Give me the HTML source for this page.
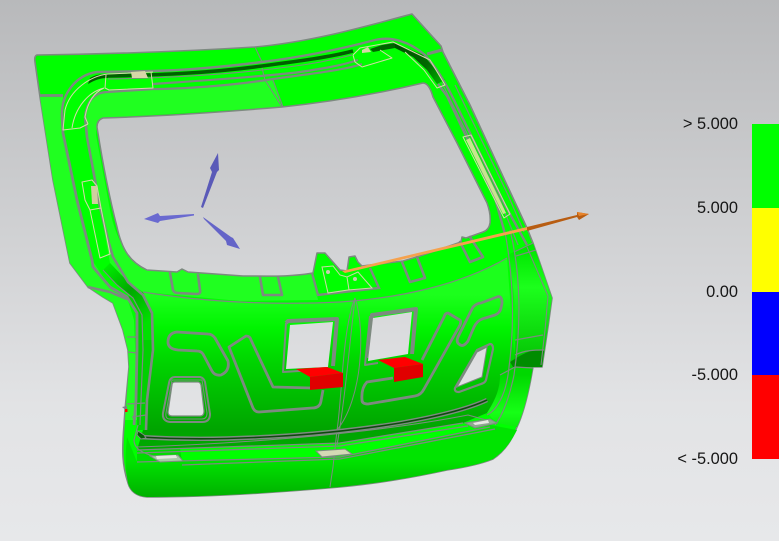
<!DOCTYPE html>
<html><head><meta charset="utf-8"><style>
html,body{margin:0;padding:0;width:779px;height:541px;overflow:hidden;background:#d0d1d3}
svg{display:block;position:absolute;left:0;top:0}
.l{position:absolute;right:41px;font:16.4px/18px "Liberation Sans",sans-serif;color:#161616;white-space:nowrap}
.b{position:absolute;left:752px;width:27px}
</style></head><body>
<svg width="779" height="541" viewBox="0 0 779 541" xmlns="http://www.w3.org/2000/svg">
<defs>
<linearGradient id="bg" gradientUnits="userSpaceOnUse" x1="0" y1="0" x2="0" y2="541"><stop offset="0" stop-color="#b8b9bb"/><stop offset=".75" stop-color="#e2e3e5"/><stop offset="1" stop-color="#e7e8ea"/></linearGradient>
<linearGradient id="body" gradientUnits="userSpaceOnUse" x1="0" y1="295" x2="0" y2="445"><stop offset="0" stop-color="#1cff1c"/><stop offset=".22" stop-color="#00f400"/><stop offset=".45" stop-color="#00d400"/><stop offset=".9" stop-color="#00a400"/><stop offset="1" stop-color="#00a800"/></linearGradient>
<linearGradient id="low" gradientUnits="userSpaceOnUse" x1="0" y1="460" x2="0" y2="497"><stop offset="0" stop-color="#00e400"/><stop offset="1" stop-color="#00b000"/></linearGradient>
<linearGradient id="side" gradientUnits="userSpaceOnUse" x1="0" y1="250" x2="0" y2="375"><stop offset="0" stop-color="#00e800"/><stop offset=".3" stop-color="#1cff1c"/><stop offset="1" stop-color="#00b800"/></linearGradient>
<linearGradient id="chan" gradientUnits="userSpaceOnUse" x1="105" y1="265" x2="150" y2="320"><stop offset="0" stop-color="#00f000"/><stop offset=".5" stop-color="#00a800"/><stop offset="1" stop-color="#00e000"/></linearGradient>
<linearGradient id="bar" gradientUnits="userSpaceOnUse" x1="395" y1="45" x2="442" y2="84"><stop offset="0" stop-color="#005000"/><stop offset=".6" stop-color="#006800"/><stop offset="1" stop-color="#00b000"/></linearGradient>
<linearGradient id="corner" gradientUnits="userSpaceOnUse" x1="0" y1="375" x2="0" y2="450"><stop offset="0" stop-color="#00d800"/><stop offset=".5" stop-color="#16ff16"/><stop offset="1" stop-color="#00d000"/></linearGradient>
</defs>
<rect width="779" height="541" fill="url(#bg)"/>
<!-- silhouette -->
<path d="M37 55C120 54 190 51 255 47C310 42 360 28 412 14L441 46L443 52L470 105L500 170L527 228L533 243L552 298L548 327L542 367L533 367C530 385 525 410 517 427C512 440 505 451 493 459C478 465 460 468 447 470C410 478 380 483 340 487C260 494 200 497 147 497C135 496 130 490 128 483C122 465 122 450 124 425L125 410L129 367L128 350L123 330L113 303L103 297L88 287L70 263L53 180L40 97L35 62Q34 56 37 55Z" fill="#00ff00" stroke="#7d8a80" stroke-width="1.6" stroke-linejoin="round"/>
<!-- lighter regions -->
<path d="M40 97L63 97L62 113L63 133L77 200L92 260L110 287L127 297L134 320L138 420L125 420L129 367L128 350L123 330L113 303L103 297L88 287L70 263L53 180Z" fill="#20ff20"/>
<path d="M92 98C95 94 100 92 108 92L153 89L230 85L273 80L282 107L103 118L97 122L96 135L110 210C115 235 125 258 145 265L190 270L312 272L318 300L240 301L143 292L128 282L110 263L100 207L87 137L85 117Z" fill="#20ff20"/>
<!-- lower body -->
<path d="M143 292C210 303 280 305 340 302C400 298 460 285 507 258L515 365C510 390 500 405 487 413L463 423L340 443L137 450L143 430L153 350L152 313Z" fill="url(#body)"/>
<path d="M143 292L152 313L153 350L147 400L146 430L137 430L137 350L137 313L127 297Z" fill="#00d000"/>
<path d="M127 437C126 450 124 460 128 483C130 490 135 496 147 497C200 497 260 494 340 487C380 483 410 478 447 470C460 468 478 465 493 459C505 451 512 440 517 430L490 425L340 457L137 462Z" fill="url(#low)"/>
<path d="M137 450L340 443L463 423L490 427L340 457L137 462Z" fill="#00ff00"/>
<path d="M137 450L180 448L182 462L137 462Z" fill="#00dc00"/>
<!-- channel dark left -->
<path d="M103 270L110 263L128 282L143 295L152 313L153 340L143 340L142 315L133 298L117 285Z" fill="url(#chan)"/>
<!-- right side panel -->
<path d="M508 255L527 245L533 243L552 298L548 327L542 367L513 365C518 330 515 290 508 255Z" fill="url(#side)"/>
<path d="M510 362C525 352 535 348 544 350L542 367L513 367Z" fill="#008c00"/>
<path d="M500 375L515 367L533 367C530 385 525 410 517 427L497 423L487 413C495 400 500 390 500 375Z" fill="url(#corner)"/>
<!-- window -->
<path d="M103 118C170 116 235 111 282 107C340 101 385 92 423 83Q429 83 433 97L457 143L487 203Q491 214 490 223Q489 230 483 232L466 238L462 237L461 242L420 256L403 261L362 266L358 262L355 256L349 257L347 271L340 270L325 253L317 253L313 273C290 277 270 276 243 276L188 272L182 269L177 272L147 270C130 262 122 250 117 227C110 200 103 165 97 127Q97 120 103 118Z" fill="url(#bg)" stroke="#7d8a80" stroke-width="1.5" stroke-linejoin="round"/>
<!-- tabs below window -->
<path d="M312 273L318 295L379 288L370 268" fill="none" stroke="#7d8a80" stroke-width="2.4"/>
<path d="M322 267L333 266L340 275L347 277L358 272L372 288L348 290L328 293ZM347 277L349 290" fill="none" stroke="#cfd8a8" stroke-width="1"/>
<circle cx="328" cy="272" r="2" fill="#c8cdb0"/><circle cx="355" cy="279" r="2" fill="#c8cdb0"/>
<g fill="none" stroke="#7d8a80" stroke-width="2.6" stroke-linejoin="round" stroke-linecap="round">
<path d="M170 273L173 290Q174 293 178 293L197 294Q201 294 200 290L198 275"/>
<path d="M260 277L263 295L282 295L278 277"/>
<path d="M402 262L410 282L425 278L417 257"/>
<path d="M460 242L470 262L483 257L470 237"/>
</g>
<!-- grooves top -->
<path d="M108 76C160 75 210 73 262 66C300 61 330 57 353 51" fill="none" stroke="#006000" stroke-width="3.6"/>
<path d="M395 43L423 55L445 80L437 84L427 70L413 57L395 48Z" fill="url(#bar)"/>
<path d="M370 49L382 45L395 43L395 48L373 52Z" fill="#006400"/>
<path d="M90 78C95 75 100 74 108 74L108 78C100 78 95 80 88 84Z" fill="#005c00"/>
<!-- channel lines -->
<g fill="none" stroke="#7d8a80" stroke-linejoin="round">
<path stroke-width="2.4" d="M62 113C62 95 75 75 97 72L153 71C190 70 230 66 262 62C310 56 345 48 375 40C392 36 410 42 425 55C435 66 445 82 452 96L505 205L527 245"/>
<path stroke-width="1.1" d="M108 79C160 78 210 76 262 70C300 66 325 62 352 55"/>
<path stroke-width="2.2" d="M85 117C86 105 92 92 108 92L153 89C180 89 230 86 273 79C310 74 345 70 362 64"/>
<path stroke-width="2.2" d="M153 84C210 80 270 76 300 72C320 69 340 66 358 60"/>
<path stroke-width="2.8" d="M62 113L63 133L77 200L92 260L93 267L110 287L127 297L137 313L137 350L136 400L134 425"/>
<path stroke-width="2.6" d="M85 117L87 137L100 207L108 240L113 257L128 282L143 295L152 313L153 350L147 400L146 430"/>
<path stroke-width="1.2" d="M103 270L117 285L133 298L142 315L143 350L141 400L140 425"/>
<path stroke-width="2.6" d="M88 287L110 292L127 299"/>
<path stroke-width="1.1" d="M255 47L262 62M262 68L265 80L282 107M273 80L283 107"/>
<path stroke-width="2.8" d="M40 95.5L63 95.5"/>
<path stroke-width="3" d="M427 54L442 50"/>
<path stroke-width="2.4" d="M438 84L447 96L475 155L495 198L505 234"/>
<path stroke-width="1.2" d="M442 83L500 200L518 245"/>
<path stroke-width="1.2" d="M455 85L508 195L524 232"/>
<path stroke-width="1.2" d="M143 292C210 303 280 305 340 302C400 298 460 285 507 258"/>
<path stroke-width="1.2" d="M138 425L134 440C134 450 145 457 180 460M127 337L137 337M128 352L137 353M127 404L145 403M132 417L146 415"/>
<path stroke-width="1" d="M355 298C342 330 342 400 337 430L333 467L330 487M355 298C366 330 362 400 337 430M355 298C350 340 345 400 337 445"/>
<path stroke-width="1.2" d="M505 232C512 270 516 320 508 375C505 395 497 410 487 415M510 230C520 270 522 320 514 375C510 395 503 415 495 425M514 252L533 243M516 256L536 250"/>
<path stroke-width="1.2" d="M515 340L543 335M515 355C525 350 535 350 544 350M500 375L515 367L533 368"/>
<path stroke-width="1.1" d="M527 247L548 296L545 330L541 365"/>
<path stroke-width="1.3" d="M137 450L340 443L463 423M137 453L340 446L468 426M137 462L340 457L490 427M182 465L340 459L495 429"/>
<path stroke-width="1.1" d="M137 447C170 446 340 440 468 415L497 423"/>
</g>
<!-- pale detail lines -->
<g fill="none" stroke="#d6d9aa" stroke-width="1" stroke-linejoin="round">
<path d="M153 72L108 74C90 76 70 90 65 110L63 130L80 128L88 124M106 75L105 88L109 90L153 88L151 72M104 88C88 92 75 108 72 128M88 124L85 117C88 100 95 92 104 88"/>
<path d="M82 182L92 180L97 186L101 208L90 210L85 200ZM90 210L100 258L110 254L101 208"/>
<path d="M353 55L360 48L393 42L430 60L445 85L437 88L424 70L405 52M353 55L355 62L362 67L392 58L380 50"/>
<path d="M463 137L471 135L510 214L504 218L463 137Z"/>
</g>
<path d="M91 186L97 186L98 204L92 204Z" fill="#cfcf9f"/>
<path d="M131 72L145 71L148 78L132 78Z" fill="#d6d6a8"/>
<path d="M362 50L368 47L371 52L362 53Z" fill="#d6d6a8"/>
<path d="M466 140L470 138L506 213L503 214Z" fill="#c7e58f"/>
<!-- dark groove bottom -->
<path d="M140 437C220 442 320 436 400 423C440 416 470 408 487 400" fill="none" stroke="#7d8a80" stroke-width="4.4"/>
<path d="M140 437C220 442 320 436 400 423C440 416 470 408 487 400" fill="none" stroke="#0d4a0d" stroke-width="1.6"/>
<path d="M138 431L144 435L146 438L141 439L137 435Z" fill="#006000" stroke="#7d8a80"/>
<!-- embossed outlines -->
<g fill="none" stroke="#7d8a80" stroke-linejoin="round" stroke-width="2.8">
<path d="M168 342Q168 333 177 332L208 334Q212 334 215 338L228 361Q230 371 221 375Q215 376 212 371L203 354Q201 351 197 351L178 350Q168 349 168 342Z"/>
<path d="M312 388L273 387L251 340Q250 336 246 336L229 347L253 408Q255 412 259 412L312 408Q320 408 321 401L323 390"/>
<path d="M393 378L367 382Q361 388 362 400Q362 404 368 404L415 396Q421 395 424 389L460 325Q462 320 458 319L448 313Q445 313 444 317L422 360"/>
<path d="M473 307Q477 303 481 303L497 297Q502 295 502 303L501 308Q500 313 495 315L482 319Q477 321 474 327L468 341Q463 348 459 344Q456 342 458 337Z"/>
<path stroke-width="2" d="M175 377L200 377Q204 378 205 382L210 414Q210 422 202 422L170 422Q162 421 163 413L169 383Q170 377 175 377Z"/>
<path stroke-width="1" d="M172 380L202 380L207 413Q207 419 202 419L170 419Q165 419 166 413Z"/>
<path stroke-width="4" d="M286 323L288 321L337 319L333 366"/>
<path stroke-width="2" d="M286 323L283 372L330 369"/>
<path stroke-width="4" d="M369 358L372 315L416 309L412 354"/>
<path stroke-width="2" d="M370 316L365 365L378 363"/>
<path stroke-width="2.2" d="M477 350L490 344Q493 344 493 349L486 380Q485 383 481 384L459 392Q454 392 455 388Z"/>
</g>
<!-- holes -->
<g fill="url(#bg)">
<path d="M175 382L198 382Q200 382 201 385L204 411Q204 416 200 416L172 416Q168 416 168 412L172 385Q172 382 175 382Z" stroke="#7d8a80" stroke-width="1.2"/>
<path d="M290 325L333 322L328 367L286 369Z"/>
<path d="M373 318L412 312L408 354L368 361Z"/>
<path d="M477 352L487 347L482 377L457 387Z" stroke="#7d8a80" stroke-width="1"/>
</g>
<path d="M316 451L345 449L352 454L322 457Z" fill="#d4d9b4" stroke="#7d8a80" stroke-width="1"/>
<path d="M465 423L490 419L497 423L475 428Z" fill="#8ea88f" stroke="#7d8a80"/>
<path d="M473 423L488 420L489 423L475 425Z" fill="#e7e9e2"/>
<path d="M150 456L178 455L183 461L160 462Z" fill="#a6c9a6" stroke="#7d8a80"/>
<path d="M156 456L176 455L177 458L157 459Z" fill="#e5e8e0"/>
<!-- red -->
<path d="M296 369L327 367L343 373L310 377Z" fill="#ff0000"/>
<path d="M310 377L343 373L343 387L310 390Z" fill="#e00000"/>
<path d="M378 360L405 357L423 364L394 368Z" fill="#ff0000"/>
<path d="M394 368L423 364L423 377L394 382Z" fill="#e00000"/>
<path d="M122 407L127 406L127 411Z" fill="#7d7d8a"/><rect x="125" y="409" width="2.5" height="3" fill="#ff0000"/>
<!-- blue triad -->
<path d="M201 207L212 172L210 168L218 153L219 170L217 172L203 208Z" fill="#5a5ab8"/>
<path d="M194 214L160 216L158 213L144 219L158 223L160 221L194 215.5Z" fill="#6a6ad0"/>
<path d="M203 217L231 237L233 238L240 249L227 245L226 241L204 219Z" fill="#6464c8"/>
<!-- orange -->
<path d="M342 271L527 227L527 230L345 273Z" fill="#f5a24e"/>
<path d="M527 227L577 215L577 212L589 214L579 220L577 217L527 231Z" fill="#b85d12"/>
<path d="M577 212L589 214L579 216Z" fill="#e8842a"/>
</svg>
<div class="l" style="top:115px">&gt; 5.000</div>
<div class="l" style="top:199px">5.000</div>
<div class="l" style="top:283px">0.00</div>
<div class="l" style="top:366px">-5.000</div>
<div class="l" style="top:450px">&lt; -5.000</div>
<div class="b" style="top:124px;height:84px;background:#00ff00"></div>
<div class="b" style="top:208px;height:84px;background:#ffff00"></div>
<div class="b" style="top:292px;height:83px;background:#0000ff"></div>
<div class="b" style="top:375px;height:84px;background:#ff0000"></div>
</body></html>
